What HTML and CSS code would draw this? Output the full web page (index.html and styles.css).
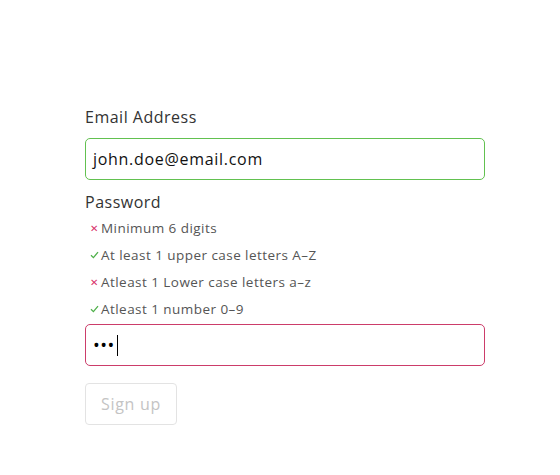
FILE: index.html
```html
<!DOCTYPE html>
<html lang="en">
<head>
<meta charset="utf-8">
<title>Sign up</title>
<link rel="stylesheet" href="styles.css">
</head>
<body>
<form class="form">
  <label class="label" for="email">Email Address</label>
  <div class="field field--valid" id="email">john.doe@email.com</div>
  <label class="label label--pw">Password</label>
  <ul class="rules">
    <li class="rule"><span class="mark mark--bad">✕</span>Minimum 6 digits</li>
    <li class="rule"><span class="mark mark--ok"><svg width="9" height="8" viewBox="0 0 9 8"><path d="M1 4.3 L3.4 6.6 L8 1.2" fill="none" stroke="#4fb04a" stroke-width="1.3"/></svg></span>At least 1 upper case letters A–Z</li>
    <li class="rule"><span class="mark mark--bad">✕</span>Atleast 1 Lower case letters a–z</li>
    <li class="rule"><span class="mark mark--ok"><svg width="9" height="8" viewBox="0 0 9 8"><path d="M1 4.3 L3.4 6.6 L8 1.2" fill="none" stroke="#4fb04a" stroke-width="1.3"/></svg></span>Atleast 1 number 0–9</li>
  </ul>
  <div class="field field--invalid"><span class="dots">•••</span><span class="caret"></span></div>
  <button type="button" class="btn" disabled>Sign up</button>
</form>
</body>
</html>
```
FILE: styles.css
```css
* { box-sizing: border-box; }
body {
  margin: 0;
  background: #fff;
  font-family: "Open Sans", "Liberation Sans", sans-serif;
  color: #2b2b2b;
}
.form {
  width: 400px;
  margin-left: 85px;
  padding-top: 106px;
  display: flex;
  flex-direction: column;
}
.label {
  font-size: 16px;
  line-height: 22px;
  letter-spacing: 0.5px;
  color: #333;
}
.field {
  margin-top: 10px;
  height: 42px;
  border-radius: 5px;
  border: 1px solid #ccc;
  padding: 0 7px;
  display: flex;
  align-items: center;
  font-size: 16px;
  letter-spacing: 0.7px;
  color: #111;
}
.field--valid { border-color: #62c150; }
.field--invalid { border-color: #cc3d6a; margin-top: 2px; }
.label--pw { margin-top: 11px; }
.rules {
  list-style: none;
  margin: 1px 0 0;
  padding: 0;
}
.rule {
  height: 27px;
  display: flex;
  align-items: center;
  font-size: 13.5px;
  letter-spacing: 0.45px;
  color: #555;
}
.mark {
  width: 11px;
  margin-left: 4px;
  display: inline-flex;
  align-items: center;
  justify-content: center;
  margin-right: 1px;
}
.mark--bad { color: #d8336a; font-size: 10px; }
.dots { font-size: 18px; letter-spacing: 0.5px; color: #000; }
.caret {
  width: 1px;
  height: 21px;
  background: #000;
  margin-left: 2px;
}
.btn {
  margin-top: 17px;
  width: 92px;
  height: 42px;
  border: 1px solid #e3e3e3;
  border-radius: 4px;
  background: #fff;
  color: #c4c4c4;
  font-family: inherit;
  font-size: 16px;
  letter-spacing: 0.7px;
  padding: 0;
}
```
